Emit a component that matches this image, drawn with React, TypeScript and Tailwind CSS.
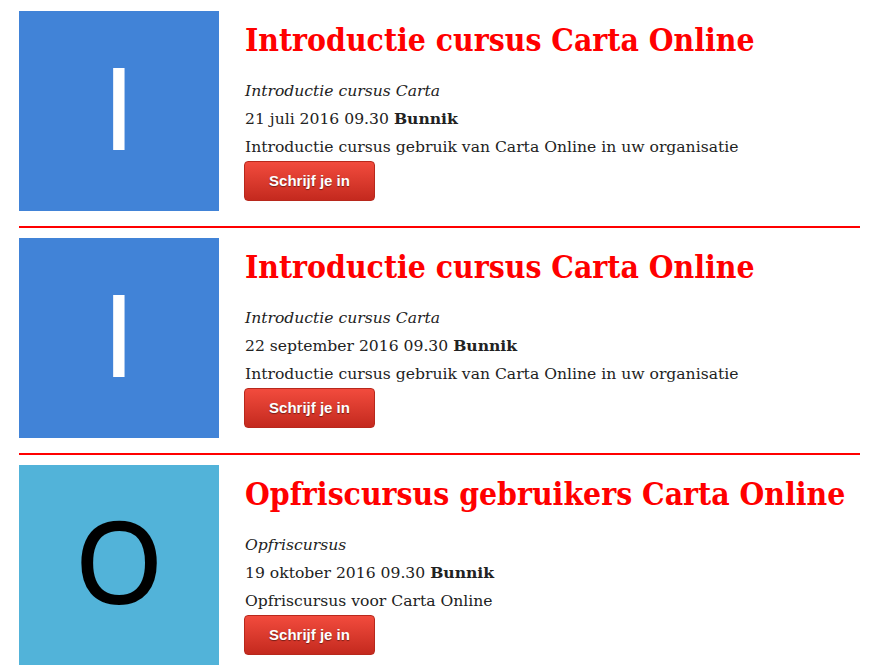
import React from 'react'

type Course = {
  letter: string
  tile: string
  letterColor: string
  title: string
  kind: string
  date: string
  place: string
  text: string
}

const courses: Course[] = [
  {
    letter: 'I',
    tile: 'bg-[#4183d7]',
    letterColor: 'text-white',
    title: 'Introductie cursus Carta Online',
    kind: 'Introductie cursus Carta',
    date: '21 juli 2016 09.30',
    place: 'Bunnik',
    text: 'Introductie cursus gebruik van Carta Online in uw organisatie',
  },
  {
    letter: 'I',
    tile: 'bg-[#4183d7]',
    letterColor: 'text-white',
    title: 'Introductie cursus Carta Online',
    kind: 'Introductie cursus Carta',
    date: '22 september 2016 09.30',
    place: 'Bunnik',
    text: 'Introductie cursus gebruik van Carta Online in uw organisatie',
  },
  {
    letter: 'O',
    tile: 'bg-[#52b3d9]',
    letterColor: 'text-black',
    title: 'Opfriscursus gebruikers Carta Online',
    kind: 'Opfriscursus',
    date: '19 oktober 2016 09.30',
    place: 'Bunnik',
    text: 'Opfriscursus voor Carta Online',
  },
]

const CourseRow = ({ c, last }: { c: Course; last: boolean }) => {
  return (
    <div className={last ? '' : 'mb-[10px] border-b-2 border-[#ff0000] pb-[15px]'}>
      <div className="flex gap-[26px]">
        <div
          className={`flex h-[200px] w-[200px] shrink-0 items-center justify-center ${c.tile}`}
        >
          {/* letter tile, slightly heavier than regular weight */}
          <span
            className={`mb-[10px] font-['Open_Sans',Arial,sans-serif] text-[112px] leading-none [-webkit-text-stroke:2px_currentColor] ${c.letterColor}`}
          >
            {c.letter}
          </span>
        </div>

        <div className="pt-[10px] font-['DejaVu_Serif_Condensed','DejaVu_Serif',Georgia,serif] text-[#222]">
          <h2 className="whitespace-nowrap text-[31.6px] font-bold leading-[38px] text-[#ff0000]">
            {c.title}
          </h2>
          <div className="font-['DejaVu_Serif',Georgia,serif] text-[15.6px] leading-[28px]">
            <p className="mt-[18px] italic">{c.kind}</p>
            <p>
              {c.date} <b>{c.place}</b>
            </p>
            <p>{c.text}</p>
          </div>
          <button className="h-[40px] w-[131px] -translate-x-px rounded-[4px] border border-[#b8281c] bg-gradient-to-b from-[#f24b3d] to-[#c4291e] font-['Liberation_Sans',Arial,sans-serif] text-[15px] font-bold text-white [text-shadow:0_1px_1px_rgba(0,0,0,0.45)]">
            Schrijf je in
          </button>
        </div>
      </div>
    </div>
  )
}

export default function App() {
  return (
    <div className="min-h-[670px] w-[870px] overflow-hidden bg-white pl-[19px] pt-[11px]">
      <div className="w-[841px]">
        {courses.map((c, i) => (
          <CourseRow key={i} c={c} last={i === courses.length - 1} />
        ))}
      </div>
    </div>
  )
}
